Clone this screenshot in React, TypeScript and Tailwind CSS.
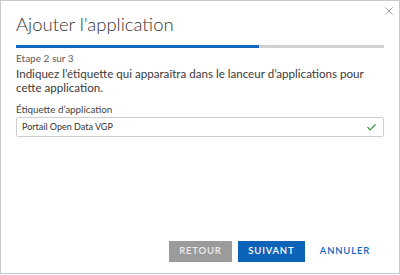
import { Check, X } from "lucide-react";

export default function App() {
  return (
    <div className="w-[400px] h-[275px] bg-white font-['Lato',sans-serif]">
      <div className="relative w-[400px] h-[274px] border border-[#c9c9c9] flex flex-col px-[15px]">
        <button className="absolute top-[3px] right-[3px] text-[#9a9a9a]">
          <X size={14} strokeWidth={1.5} />
        </button>

        <h1 className="pt-[11px] text-[18.5px] leading-[24px] font-light text-[#333]">
          Ajouter l'application
        </h1>

        <div className="mt-[9px] h-[3px] bg-[#d0d0d0] flex">
          <div className="w-[243px] bg-[#1467c0]" />
        </div>

        <p className="mt-[4px] text-[10px] leading-[12px] text-[#5c5c5c]">Etape 2 sur 3</p>
        <p className="mt-[3px] text-[11.6px] leading-[14px] text-[#3a3a3a]">
          Indiquez l’étiquette qui apparaîtra dans le lanceur d’applications pour cette application.
        </p>

        <label className="mt-[8px] text-[9.8px] leading-[13px] text-[#444]">Étiquette d’application</label>
        <div className="mt-[1px] h-[20px] border border-[#cfcfcf] rounded-[2px] flex items-center justify-between pl-[5px] pr-[6px]">
          <span className="text-[9px] text-[#333]">Portail Open Data VGP</span>
          <Check size={11} strokeWidth={2.5} className="text-[#348f34]" />
        </div>

        <div className="mt-auto mb-[11px] flex items-center justify-end gap-[6px] pr-[14px]">
          <button className="w-[63px] h-[21px] bg-[#9b9b9b] text-[#ececec] text-[9.5px] font-semibold tracking-[0.8px]">
            RETOUR
          </button>
          <button className="w-[67px] h-[21px] bg-[#0d63b8] text-white text-[9.5px] font-semibold tracking-[0.8px]">
            SUIVANT
          </button>
          <button className="ml-[9px] h-[21px] text-[#1565c0] text-[9.5px] font-semibold tracking-[0.8px]">
            ANNULER
          </button>
        </div>
      </div>
    </div>
  );
}
